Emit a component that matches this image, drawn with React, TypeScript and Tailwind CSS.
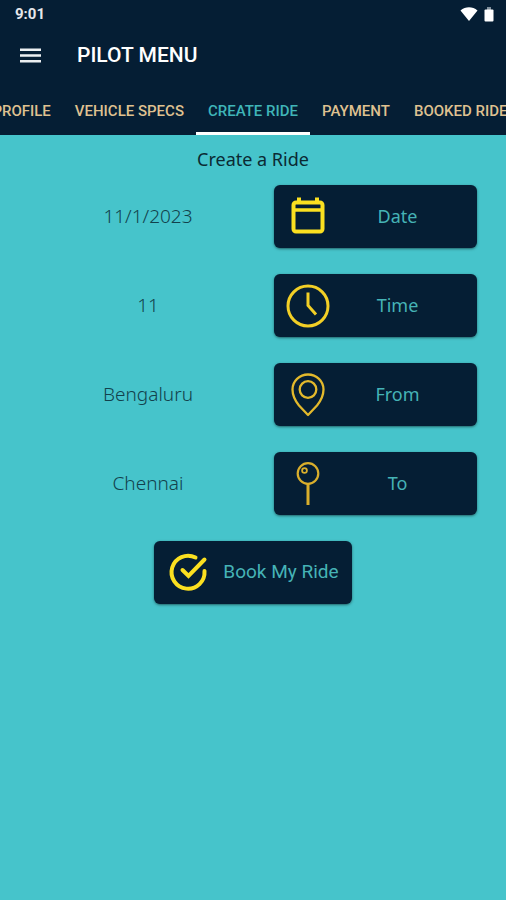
import { useState } from "react";
import type { ReactNode } from "react";

type TabProps = {
    label: string;
    active: boolean;
    onSelect: (label: string) => void;
};

type FieldRowProps = {
    id: string;
    value: string;
    label: string;
    icon: ReactNode;
};

const LEFT_TABS = ["PROFILE", "VEHICLE SPECS"];
const RIGHT_TABS = ["PAYMENT", "BOOKED RIDES"];

function CalendarIcon() {
    return (
        <svg width="44" height="44" viewBox="0 0 44 44" fill="none" stroke="#fbe020" strokeWidth="4" aria-hidden="true">
            <rect x="7.5" y="7.5" width="29" height="29" rx="2.5" />
            <path d="M8 15h29" strokeWidth="3.5" />
            <path d="M13 2.5v5M31 2.5v5" />
        </svg>
    );
}

function ClockIcon() {
    return (
        <svg width="44" height="44" viewBox="0 0 44 44" fill="none" stroke="#f2cf26" strokeWidth="3" aria-hidden="true">
            <circle cx="22" cy="22" r="20" />
            <path d="M22 8.5v13l8 9" />
        </svg>
    );
}

function PinIcon() {
    return (
        <svg width="44" height="44" viewBox="0 0 44 44" fill="none" stroke="#e3b92c" strokeWidth="2.3" aria-hidden="true">
            <path d="M22 42L13 32.5C9 27.5 6.5 22 6.5 16.5a15.5 15 0 0 1 31 0C37.5 22 35 27.5 31 32.5z" strokeLinejoin="round" />
            <circle cx="22" cy="16.5" r="8.3" />
        </svg>
    );
}

function TackIcon() {
    return (
        <svg width="44" height="44" viewBox="0 0 44 44" fill="none" stroke="#d9ae2c" strokeWidth="2.2" aria-hidden="true">
            <circle cx="22" cy="11.5" r="10.3" />
            <circle cx="18.5" cy="8.5" r="2.4" strokeWidth="1.8" />
            <path d="M22 22v21" strokeWidth="3" />
        </svg>
    );
}

function CheckIcon() {
    return (
        <svg width="44" height="44" viewBox="0 0 44 44" fill="none" stroke="#fbe020" strokeWidth="4" strokeLinecap="round" aria-hidden="true">
            <path d="M28.5 6.5A16.5 16.5 0 1 0 37.5 20" />
            <path d="M15.5 19l6 6L37.5 8.5" />
        </svg>
    );
}

function Tab({ label, active, onSelect }: TabProps) {
    return (
        <button
            type="button"
            role="tab"
            aria-selected={active}
            onClick={() => onSelect(label)}
            className={`h-full shrink-0 border-b-3 px-3 pt-1.5 text-[15px] font-medium whitespace-nowrap ${
                active ? "border-white text-[#3fb5b8]" : "border-transparent text-[#dfc190]"
            }`}
        >
            {label}
        </button>
    );
}

function FieldRow({ id, value, label, icon }: FieldRowProps) {
    return (
        <div className="flex items-center">
            <output htmlFor={id} className="flex-1 text-center text-[19px] font-light text-[#12414c]">
                {value}
            </output>
            <button
                type="button"
                id={id}
                className="flex h-[63px] w-[203px] items-center rounded-md bg-[#051e34] px-3 text-[18px] text-[#45b3b6] shadow-sm shadow-black/40"
            >
                {icon}
                <span className="flex-1 text-center">{label}</span>
            </button>
        </div>
    );
}

export default function App() {
    const [tab, setTab] = useState("CREATE RIDE");

    return (
        <div className="min-h-screen bg-[#46c4cb] font-['Noto_Sans',sans-serif]">
            <header className="bg-[#051e34] font-[Roboto,sans-serif] text-white">
                {/* Status bar */}
                <div className="flex h-7 items-center justify-between pr-3 pl-[15px]">
                    <span className="text-[15px] font-bold text-gray-200">9:01</span>
                    <div className="flex items-center gap-1.5">
                        <svg width="18" height="14" viewBox="0 0 18 14" fill="white" aria-hidden="true">
                            <path d="M0.5 3.5C5.5-0.8 12.5-0.8 17.5 3.5L9 14z" />
                        </svg>
                        <svg width="10" height="16" viewBox="0 0 10 16" fill="white" aria-hidden="true">
                            <rect x="3" y="1" width="4" height="3" fill="#7f8e9b" />
                            <rect x="0.5" y="3.5" width="9" height="12" rx="1" />
                        </svg>
                    </div>
                </div>

                {/* App bar */}
                <div className="flex h-14 items-center gap-9 pl-5">
                    <button type="button" aria-label="Open menu">
                        <svg width="21" height="16" viewBox="0 0 21 16" fill="#eceff1" aria-hidden="true">
                            <path d="M0 0.5h21v2.6H0zM0 6.2h21v2.6H0zM0 11.9h21v2.6H0z" />
                        </svg>
                    </button>
                    <h1 className="text-[21px] font-medium">PILOT MENU</h1>
                </div>

                <div role="tablist" className="grid h-[51px] grid-cols-[1fr_auto_1fr] overflow-hidden">
                    <div className="flex min-w-0 justify-end">
                        {LEFT_TABS.map((label) => (
                            <Tab key={label} label={label} active={tab === label} onSelect={setTab} />
                        ))}
                    </div>
                    <Tab label="CREATE RIDE" active={tab === "CREATE RIDE"} onSelect={setTab} />
                    <div className="flex min-w-0">
                        {RIGHT_TABS.map((label) => (
                            <Tab key={label} label={label} active={tab === label} onSelect={setTab} />
                        ))}
                    </div>
                </div>
            </header>

            <main className="pt-2.5">
                <h2 className="text-center text-lg text-[#0b2a33]">Create a Ride</h2>
                <form className="mt-3 flex flex-col gap-[26px]" onSubmit={(e) => e.preventDefault()}>
                    <div className="flex flex-col gap-[26px] pr-[29px] pl-[22px]">
                        <FieldRow id="date" value="11/1/2023" label="Date" icon={<CalendarIcon />} />
                        <FieldRow id="time" value="11" label="Time" icon={<ClockIcon />} />
                        <FieldRow id="from" value="Bengaluru" label="From" icon={<PinIcon />} />
                        <FieldRow id="to" value="Chennai" label="To" icon={<TackIcon />} />
                    </div>
                    <button
                        type="submit"
                        className="flex h-[63px] items-center gap-3 self-center rounded-md bg-[#051e34] px-[13px] font-[Roboto,sans-serif] text-[19px] text-[#45b3b6] shadow-sm shadow-black/40"
                    >
                        <CheckIcon />
                        Book My Ride
                    </button>
                </form>
            </main>
        </div>
    );
}
